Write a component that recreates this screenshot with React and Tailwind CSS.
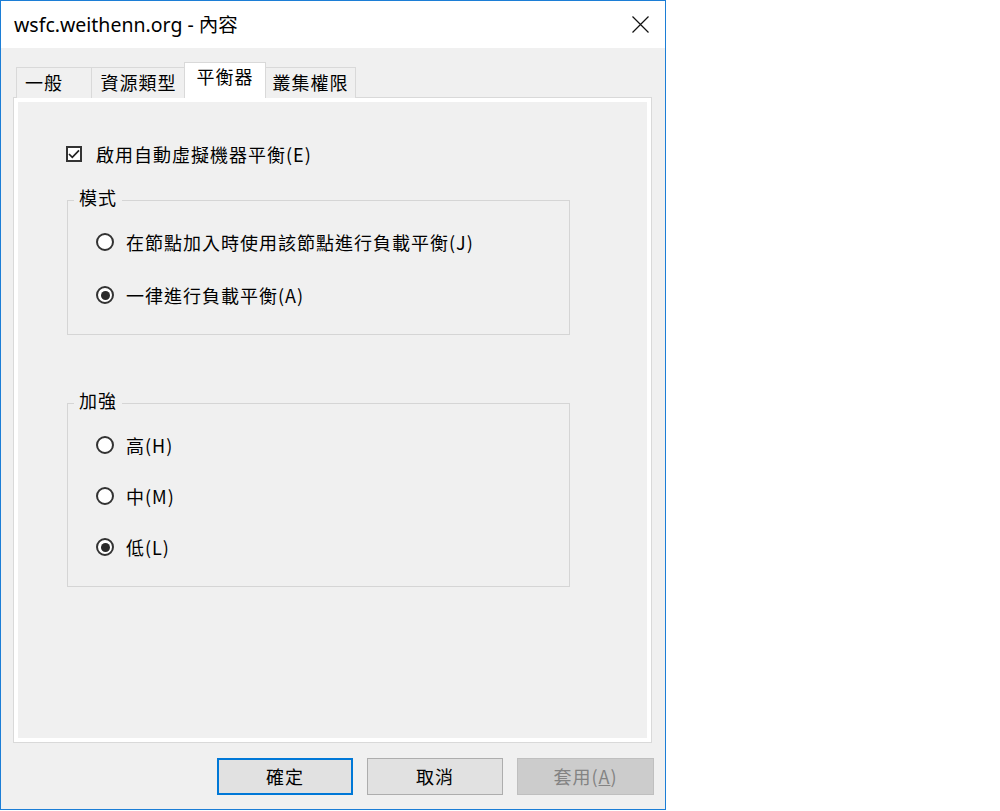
const cjk = { fontFamily: '"Noto Sans CJK TC", "Noto Sans", sans-serif' };

function Radio({ checked, label }) {
    return (
        <div className="flex items-center h-[20px] gap-[12px]">
            <span className="shrink-0 w-[18px] h-[18px] rounded-full border-2 border-[#333333] bg-white flex items-center justify-center">
                {checked && <span className="w-[9px] h-[9px] rounded-full bg-[#2a2a2a]" />}
            </span>
            <span className="text-[18px] leading-[20px] tracking-[1px] text-black" style={cjk}>{label}</span>
        </div>
    );
}

function GroupBox({ title, className, children }) {
    return (
        <div className={`relative ml-[1px] w-[503px] border border-[#d5d5d5] ${className}`}>
            {/* legend sits over the top border */}
            <span
                className="absolute left-[6px] top-[-14px] px-[5px] bg-[#f0f0f0] text-[18px] leading-[20px] tracking-[1px] text-black"
                style={cjk}
            >
                {title}
            </span>
            {children}
        </div>
    );
}

function Tab({ label, selected, className }) {
    if (selected) {
        return (
            <div className={`h-[36px] bg-white border border-b-0 border-[#d9d9d9] flex justify-center pt-[1px] ${className}`}>
                <span className="text-[18px] leading-[24px] tracking-[1px] text-black" style={cjk}>{label}</span>
            </div>
        );
    }
    return (
        <div className={`h-[31px] bg-[#f0f0f0] border border-b-0 border-[#d9d9d9] flex pt-[2px] ${className}`}>
            <span className="text-[18px] leading-[24px] tracking-[1px] text-black" style={cjk}>{label}</span>
        </div>
    );
}

export default function App() {
    return (
        <div className="w-[1000px] h-[811px] bg-white">
            <div className="w-[666px] h-[810px] border border-[#1c7ed6] flex flex-col">
                {/* Title bar */}
                <div className="h-[47px] bg-white flex items-center justify-between pl-[13px] pr-[16px]">
                    <span className="text-[19.5px] text-black" style={{ fontFamily: '"Noto Sans", "Noto Sans CJK TC", sans-serif' }}>
                        wsfc.weithenn.org - 內容
                    </span>
                    <svg width="17" height="17" viewBox="0 0 17 17" fill="none">
                        <path d="M0.5 0.5 L16.5 16.5 M16.5 0.5 L0.5 16.5" stroke="#111" strokeWidth="1.2" />
                    </svg>
                </div>

                {/* Body */}
                <div className="flex-1 bg-[#f0f0f0] pl-[12px] pt-[14px] flex flex-col">
                    <div className="relative z-10 h-[36px] -mb-px flex items-end pl-[3px]">
                        <Tab label="一般" className="w-[76px] pl-[8px]" />
                        <Tab label="資源類型" className="w-[95px] -ml-px justify-center" />
                        <Tab label="平衡器" selected className="w-[82px] -ml-[2px]" />
                        <Tab label="叢集權限" className="w-[91px] -ml-px justify-center" />
                    </div>

                    <div className="w-[639px] h-[646px] border border-[#d9d9d9] bg-white p-[4px]">
                        <div className="h-full bg-[#f0f0f0] pl-[48px] pt-[42px] flex flex-col">
                            <div className="flex items-center h-[20px] gap-[14px]">
                                <span className="shrink-0 w-[16px] h-[16px] border-2 border-[#333333] bg-white flex items-center justify-center">
                                    <svg width="12" height="12" viewBox="0 0 12 12" fill="none">
                                        <path d="M1 6 L4.3 9.3 L11 2.3" stroke="#222" strokeWidth="1.7" />
                                    </svg>
                                </span>
                                <span className="text-[18px] leading-[20px] tracking-[1px] text-black" style={cjk}>
                                    啟用自動虛擬機器平衡(E)
                                </span>
                            </div>

                            <GroupBox title="模式" className="mt-[36px] h-[135px] pt-[31px] pl-[28px] flex flex-col gap-[33px]">
                                <Radio label="在節點加入時使用該節點進行負載平衡(J)" />
                                <Radio checked label="一律進行負載平衡(A)" />
                            </GroupBox>

                            <GroupBox title="加強" className="mt-[68px] h-[184px] pt-[31px] pl-[28px] flex flex-col gap-[31px]">
                                <Radio label="高(H)" />
                                <Radio label="中(M)" />
                                <Radio checked label="低(L)" />
                            </GroupBox>
                        </div>
                    </div>

                    {/* Buttons */}
                    <div className="mt-[15px] flex justify-end gap-[14px] pr-[11px]">
                        <button className="w-[136px] h-[37px] border-2 border-[#0078d7] bg-[#e1e1e1] text-[18px] tracking-[1px] text-black" style={cjk}>
                            確定
                        </button>
                        <button className="w-[136px] h-[37px] border border-[#adadad] bg-[#e1e1e1] text-[18px] tracking-[1px] text-black" style={cjk}>
                            取消
                        </button>
                        <button disabled className="w-[137px] h-[37px] border border-[#bfbfbf] bg-[#cccccc] text-[18px] tracking-[1px] text-[#838383]" style={cjk}>
                            套用(<span className="underline">A</span>)
                        </button>
                    </div>
                </div>
            </div>
        </div>
    );
}
